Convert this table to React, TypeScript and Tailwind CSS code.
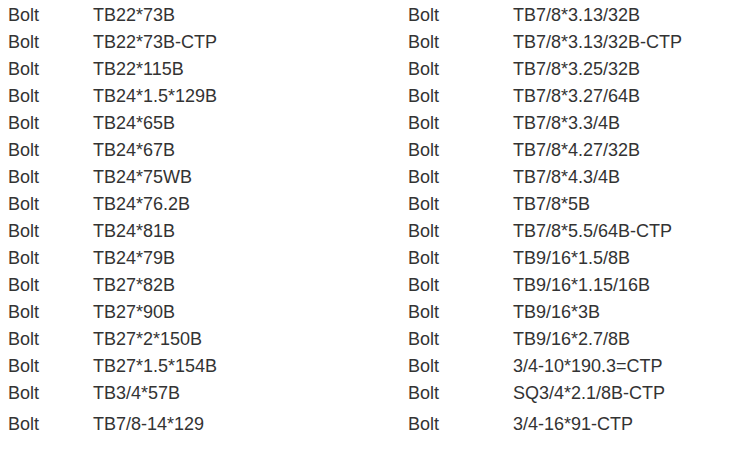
import React from 'react';

const rows: [string, string][] = [
  ['TB22*73B', 'TB7/8*3.13/32B'],
  ['TB22*73B-CTP', 'TB7/8*3.13/32B-CTP'],
  ['TB22*115B', 'TB7/8*3.25/32B'],
  ['TB24*1.5*129B', 'TB7/8*3.27/64B'],
  ['TB24*65B', 'TB7/8*3.3/4B'],
  ['TB24*67B', 'TB7/8*4.27/32B'],
  ['TB24*75WB', 'TB7/8*4.3/4B'],
  ['TB24*76.2B', 'TB7/8*5B'],
  ['TB24*81B', 'TB7/8*5.5/64B-CTP'],
  ['TB24*79B', 'TB9/16*1.5/8B'],
  ['TB27*82B', 'TB9/16*1.15/16B'],
  ['TB27*90B', 'TB9/16*3B'],
  ['TB27*2*150B', 'TB9/16*2.7/8B'],
  ['TB27*1.5*154B', '3/4-10*190.3=CTP'],
  ['TB3/4*57B', 'SQ3/4*2.1/8B-CTP'],
  ['TB7/8-14*129', '3/4-16*91-CTP'],
];

export default function App() {
  return (
    <div
      className="w-[745px] h-[452px] bg-white text-[#333333] text-[18px] pl-[8px] pt-[1px] overflow-hidden"
      style={{ fontFamily: '"Liberation Sans", Arial, sans-serif' }}
    >
      {rows.map(([left, right], i) => (
        <div
          key={i}
          className={`grid grid-cols-[85px_315px_105px_1fr] h-[27px] items-center leading-none ${
            i === rows.length - 1 ? 'mt-[4px]' : ''
          }`}
        >
          <div>Bolt</div>
          <div>{left}</div>
          <div>Bolt</div>
          <div>{right}</div>
        </div>
      ))}
    </div>
  );
}
